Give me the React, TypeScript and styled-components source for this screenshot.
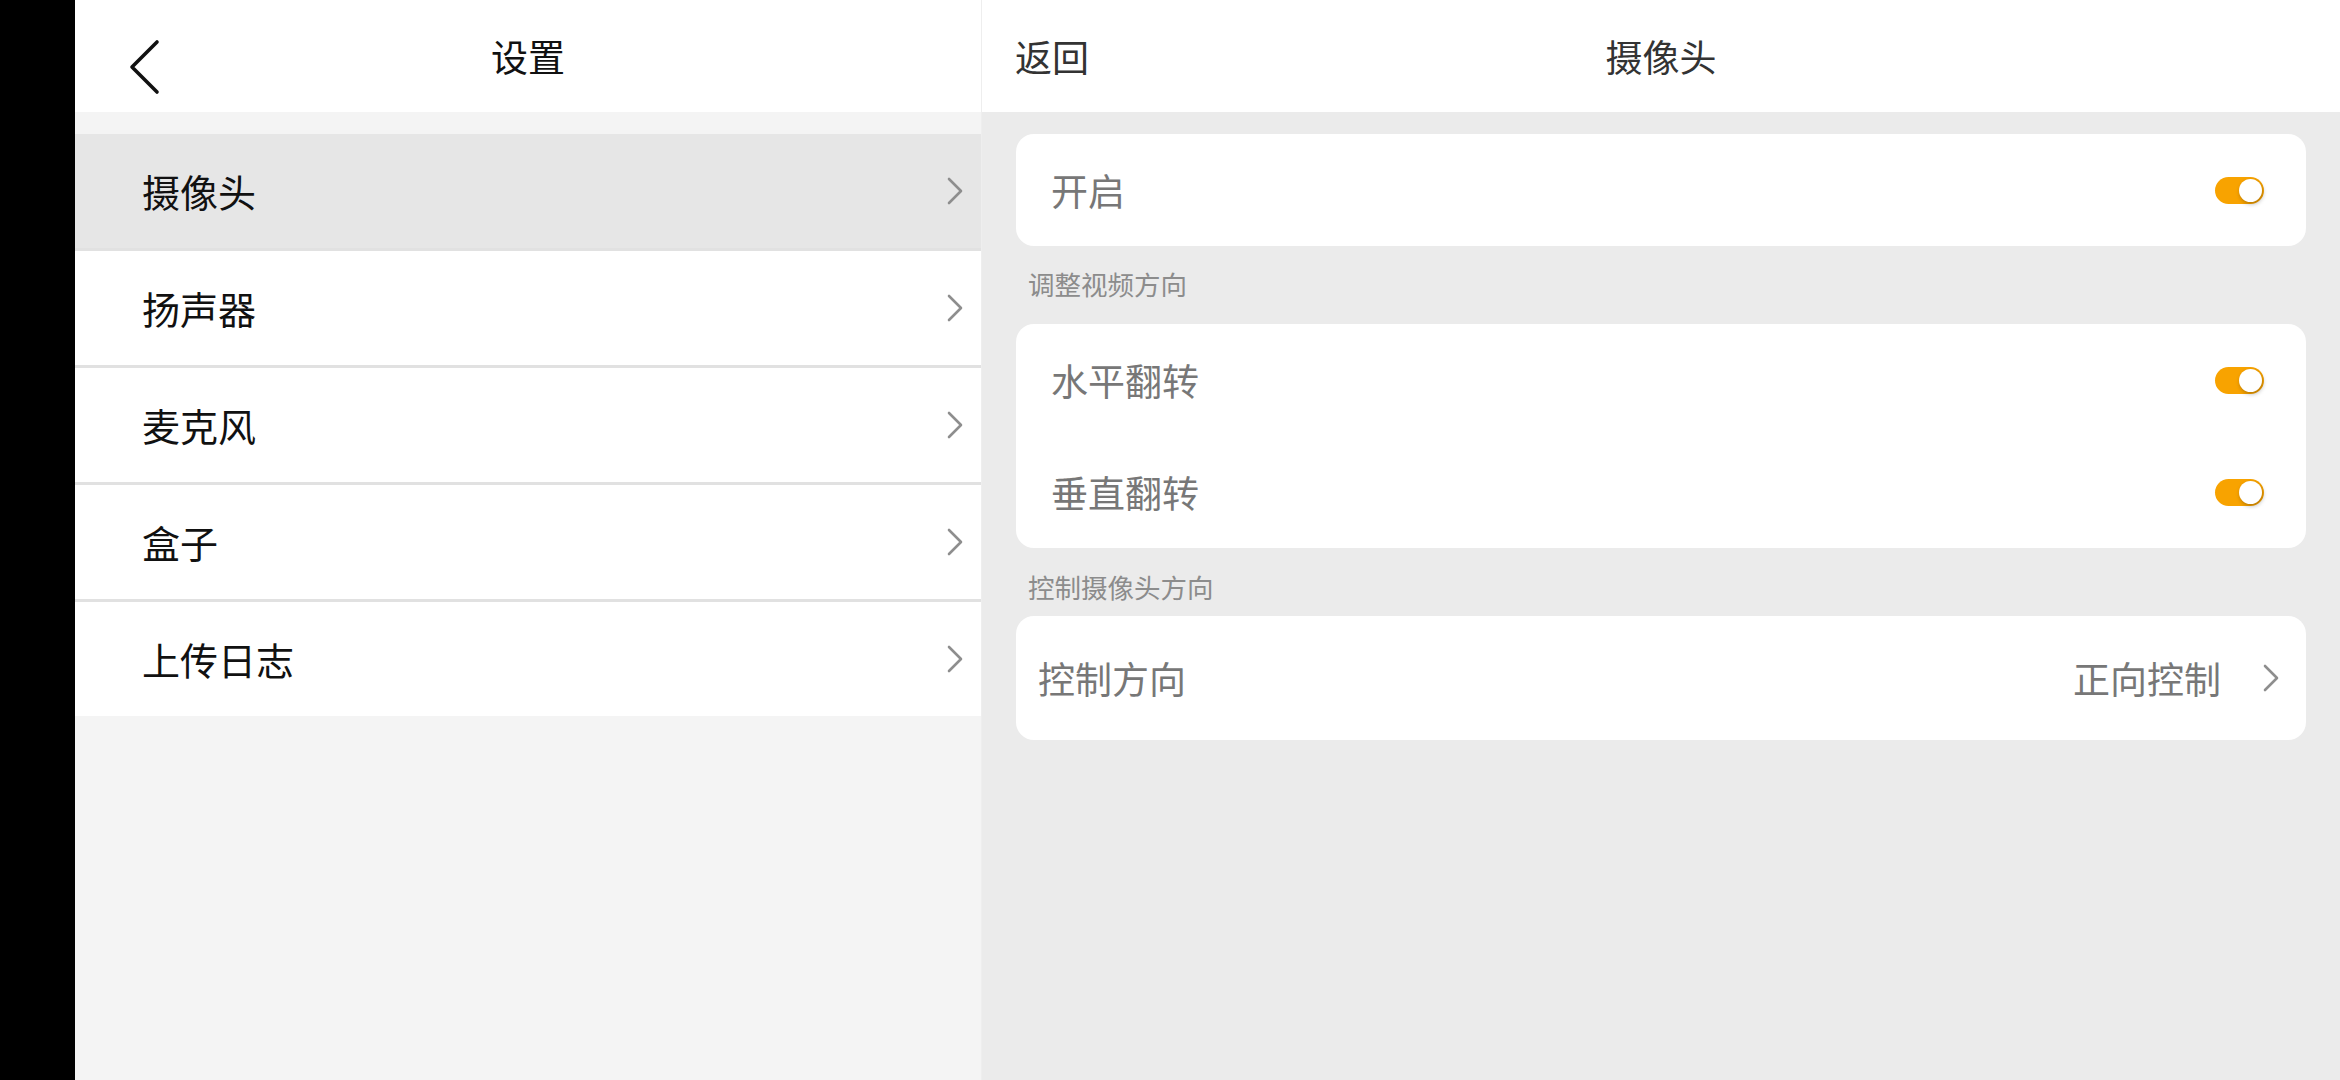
import React from "react";
import styled, { createGlobalStyle } from "styled-components";

const GlobalStyle = createGlobalStyle`
  html, body, #root { margin: 0; padding: 0; height: 100%; }
  body {
    font-family: "Noto Sans CJK SC", "Noto Sans", sans-serif;
    background: #ebebeb;
  }
  * { box-sizing: border-box; }
`;

const Screen = styled.div`
  display: flex;
  width: 2340px;
  height: 1080px;
  overflow: hidden;
`;

const SideBar = styled.div`
  width: 75px;
  flex: none;
  background: #000;
`;

const LeftPanel = styled.div`
  width: 906px;
  flex: none;
  display: flex;
  flex-direction: column;
  background: #f4f4f4;
`;

const RightPanel = styled.div`
  flex: 1;
  display: flex;
  flex-direction: column;
  background: #ebebeb;
`;

const Header = styled.div`
  height: 112px;
  flex: none;
  background: #fff;
  display: grid;
  grid-template-columns: 1fr auto 1fr;
  align-items: center;
`;

const HeaderSide = styled.div<{ $pad: number }>`
  display: flex;
  align-items: center;
  padding-left: ${(p) => p.$pad}px;
`;

const HeaderTitle = styled.div<{ $color: string }>`
  font-size: 37px;
  line-height: 1;
  color: ${(p) => p.$color};
`;

const BackText = styled.span`
  font-size: 37px;
  line-height: 1;
  color: #333;
`;

const BackButton = styled.svg`
  display: block;
  width: 34px;
  height: 58px;
  margin-top: 24px;
`;

const List = styled.div`
  margin-top: 22px;
  display: flex;
  flex-direction: column;
`;

const ListRow = styled.div<{ $active?: boolean }>`
  height: 117px;
  display: flex;
  align-items: center;
  justify-content: space-between;
  padding: 0 18px 0 67px;
  background: ${(p) => (p.$active ? "#e6e6e6" : "#fff")};
  border-bottom: 3px solid #e1e1e1;
  &:last-child {
    height: 114px;
    border-bottom: none;
  }
`;

const ListLabel = styled.span`
  font-size: 38px;
  line-height: 1;
  color: #111;
`;

const Chevron = styled.svg`
  display: block;
  width: 16px;
  height: 28px;
  flex: none;
`;

const Content = styled.div`
  padding: 22px 34px 0 34px;
  display: flex;
  flex-direction: column;
`;

const Card = styled.div`
  background: #fff;
  border-radius: 18px;
  display: flex;
  flex-direction: column;
`;

const CardRow = styled.div<{ $h: number; $padL: number; $padR: number }>`
  height: ${(p) => p.$h}px;
  display: flex;
  align-items: center;
  justify-content: space-between;
  padding: 0 ${(p) => p.$padR}px 0 ${(p) => p.$padL}px;
`;

const RowLabel = styled.span`
  font-size: 37px;
  line-height: 1;
  color: #777;
`;

const RowRight = styled.div`
  display: flex;
  align-items: center;
  gap: 42px;
`;

const SectionLabel = styled.div<{ $top: number; $bottom: number }>`
  font-size: 26.5px;
  line-height: 27px;
  color: #8c8c8c;
  padding-left: 12px;
  margin: ${(p) => p.$top}px 0 ${(p) => p.$bottom}px;
`;

const Toggle = styled.div<{ $on: boolean }>`
  position: relative;
  width: 49px;
  height: 27px;
  border-radius: 14px;
  background: ${(p) => (p.$on ? "#f8a300" : "#d8d8d8")};
  flex: none;
`;

const Knob = styled.div<{ $on: boolean }>`
  position: absolute;
  top: 2px;
  ${(p) => (p.$on ? "right: 2px;" : "left: 2px;")}
  width: 23px;
  height: 23px;
  border-radius: 50%;
  background: #fff;
  box-shadow: 1px 2px 4px rgba(0, 0, 0, 0.28);
`;

const Divider = styled.div`
  width: 1px;
  flex: none;
  background: #eeeeee;
`;

const ChevronIcon = ({ color }: { color: string }) => (
  <Chevron viewBox="0 0 16 28">
    <polyline
      points="2,2 14,14 2,26"
      fill="none"
      stroke={color}
      strokeWidth="2.6"
      strokeLinecap="round"
      strokeLinejoin="round"
    />
  </Chevron>
);

const Switch = ({ on }: { on: boolean }) => (
  <Toggle $on={on}>
    <Knob $on={on} />
  </Toggle>
);

const menu = ["摄像头", "扬声器", "麦克风", "盒子", "上传日志"];

export default function App() {
  return (
    <>
      <GlobalStyle />
      <Screen>
        <SideBar />
        <LeftPanel>
          <Header>
            <HeaderSide $pad={53}>
              <BackButton viewBox="0 0 34 58">
                <polyline
                  points="29,3 4,28 29,53"
                  fill="none"
                  stroke="#111"
                  strokeWidth="3.6"
                  strokeLinecap="round"
                  strokeLinejoin="round"
                />
              </BackButton>
            </HeaderSide>
            <HeaderTitle $color="#111">设置</HeaderTitle>
            <div />
          </Header>
          <List>
            {menu.map((m, i) => (
              <ListRow key={m} $active={i === 0}>
                <ListLabel>{m}</ListLabel>
                <ChevronIcon color="#8e8e8e" />
              </ListRow>
            ))}
          </List>
        </LeftPanel>
        <Divider />
        <RightPanel>
          <Header>
            <HeaderSide $pad={33}>
              <BackText>返回</BackText>
            </HeaderSide>
            <HeaderTitle $color="#333">摄像头</HeaderTitle>
            <div />
          </Header>
          <Content>
            <Card>
              <CardRow $h={112} $padL={35} $padR={42}>
                <RowLabel>开启</RowLabel>
                <Switch on />
              </CardRow>
            </Card>
            <SectionLabel $top={24} $bottom={27}>调整视频方向</SectionLabel>
            <Card>
              <CardRow $h={112} $padL={35} $padR={42}>
                <RowLabel>水平翻转</RowLabel>
                <Switch on />
              </CardRow>
              <CardRow $h={112} $padL={35} $padR={42}>
                <RowLabel>垂直翻转</RowLabel>
                <Switch on />
              </CardRow>
            </Card>
            <SectionLabel $top={25} $bottom={16}>控制摄像头方向</SectionLabel>
            <Card>
              <CardRow $h={124} $padL={22} $padR={27}>
                <RowLabel>控制方向</RowLabel>
                <RowRight>
                  <RowLabel>正向控制</RowLabel>
                  <ChevronIcon color="#8e8e8e" />
                </RowRight>
              </CardRow>
            </Card>
          </Content>
        </RightPanel>
      </Screen>
    </>
  );
}
